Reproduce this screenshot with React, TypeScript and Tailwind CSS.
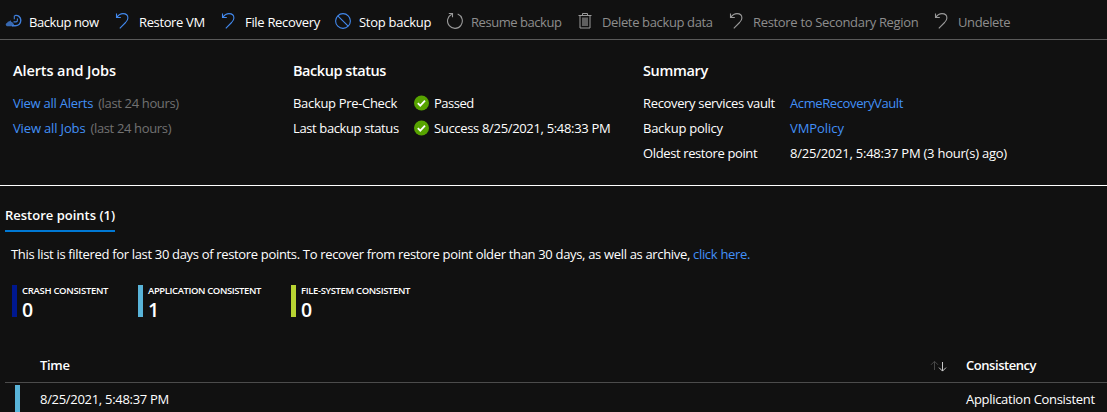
import type { ReactNode } from "react";

const RestoreIcon = () => (
  <svg width="16" height="18" viewBox="0 0 16 18" fill="none" stroke="currentColor" strokeWidth="1.1">
    <path d="M1.5 1.5V5.5H5.8M1.7 5.3C3.4 3 5.4 1.6 8 1.6c3 0 4.9 1.8 4.9 4.3 0 2-1 3.2-2.3 4.6L4.8 16.4" />
  </svg>
);

const BackupIcon = () => (
  <svg width="17" height="18" viewBox="0 0 17 18" fill="none" className="shrink-0">
    <path d="M2 14.200a1.700 1.700 0 0 1 0-3.300 2.500 2.500 0 0 1 2.400-1.700l1.200-1 .6 1.500c1.200.3 1.800 1 2.100 1.900.9.300 1.100 2.200-.2 2.600z" fill="#3768b0" />
    <path d="M9.500 3.600c3.500-1 6.300 1.400 6.300 4.700 0 3.200-2.300 5.500-5.600 5.500H7" stroke="#3f7fdc" strokeWidth="1.400" />
    <path d="M9.300 3.700v3.600M8.500 9.900h2.600c1 0 1.300-.8 1.300-2V6.400" stroke="#3f7fdc" strokeWidth="1.100" />
  </svg>
);

const StopIcon = () => (
  <svg width="16" height="18" viewBox="0 0 16 18" fill="none" stroke="currentColor" strokeWidth="1.1">
    <circle cx="8" cy="9" r="7.400" />
    <path d="M2.800 3.800l10.400 10.400" />
  </svg>
);

const ResumeIcon = () => (
  <svg width="16" height="18" viewBox="0 0 16 18" fill="none" stroke="currentColor" strokeWidth="1.1">
    <path d="M10.700 2.100a7.400 7.400 0 1 1-6 .2M1.800 1.500H5.500V5.200" />
  </svg>
);

const DeleteIcon = () => (
  <svg width="16" height="18" viewBox="0 0 16 18" fill="none" stroke="currentColor">
    <path d="M.5 3.500h13M4.500 3.500v-2h5v2M2 3.500v12.500h10V3.500" />
    <rect x="4" y="5.500" width="6" height="8.500" fill="#5f5f5f" stroke="none" />
  </svg>
);

const CheckIcon = () => (
  <svg width="16" height="16" viewBox="0 0 16 16" fill="none" className="mb-0.5">
    <circle cx="8.500" cy="8" r="7.500" fill="#57a300" />
    <path d="M4.800 8.200l2.500 2.500 4.700-5" stroke="#fff" strokeWidth="1.800" />
  </svg>
);

const SortIcon = () => (
  <svg width="17" height="12" viewBox="0 0 17 12" fill="none">
    <path d="M4.500 10V1.500M1 4.800l3.500-3.500L8 4.800" stroke="#484848" />
    <path d="M12.500 2v9M9 7.600l3.500 3.500L16 7.600" stroke="#c8c8c8" />
  </svg>
);

type ActionProps = { icon: ReactNode; label: string; width: string; tracking: string; disabled?: boolean };

function Action({ icon, label, width, tracking, disabled }: ActionProps) {
  return (
    <button className={`flex shrink-0 items-center gap-2 whitespace-nowrap ${width}`}>
      <span className={`flex w-4 shrink-0 ${disabled ? "text-[#9a9a9a]" : "text-[#4289ee]"}`}>{icon}</span>
      <span className={`pt-[3px] ${tracking} ${disabled ? "text-[#8d8d8d]" : "text-white"}`}>{label}</span>
    </button>
  );
}

type StatProps = { color: string; label: string; value: number; width: string; tracking: string };

function Stat({ color, label, value, width, tracking }: StatProps) {
  return (
    <div className={`flex h-8 ${width}`}>
      <div className={`w-[5px] shrink-0 ${color}`} />
      <div className="pl-[5px]">
        <div className={`h-[13px] text-[9.5px] leading-[11px] font-semibold whitespace-nowrap ${tracking}`}>{label}</div>
        <div className="text-[19.5px] leading-[23px] font-semibold">{value}</div>
      </div>
    </div>
  );
}

const link = "text-[#4290f7]";

export default function App() {
  return (
    <main className="h-[412px] w-full overflow-hidden bg-[#111111] font-['Open_Sans','Noto_Sans',sans-serif] text-[13px] leading-[25px] text-white">
      <header className="flex h-10 items-center border-b border-[#5a5a5a] pt-0.5 pl-[5px]">
        <Action icon={<BackupIcon />} label="Backup now" width="w-[110px]" tracking="tracking-[-0.43px]" />
        <Action icon={<RestoreIcon />} label="Restore VM" width="w-[106px]" tracking="tracking-[-0.37px]" />
        <Action icon={<RestoreIcon />} label="File Recovery" width="w-[114px]" tracking="tracking-[-0.31px]" />
        <Action icon={<StopIcon />} label="Stop backup" width="w-[112px]" tracking="tracking-[-0.26px]" />
        <Action icon={<ResumeIcon />} label="Resume backup" width="w-[131px]" tracking="tracking-[-0.46px]" disabled />
        <Action icon={<DeleteIcon />} label="Delete backup data" width="w-[151px]" tracking="tracking-[-0.36px]" disabled />
        <Action icon={<RestoreIcon />} label="Restore to Secondary Region" width="w-[205px]" tracking="tracking-[-0.32px]" disabled />
        <Action icon={<RestoreIcon />} label="Undelete" width="w-[90px]" tracking="tracking-[-0.38px]" disabled />
      </header>

      <section className="flex h-[146px] border-b border-white pt-[18px] pl-[13px] whitespace-nowrap">
        <div className="w-[280px]">
          <h2 className="mb-2 text-[14.5px] font-semibold tracking-[-0.1px]">Alerts and Jobs</h2>
          <div className="flex gap-[5px]">
            <a className={`${link} tracking-[-0.25px]`}>View all Alerts</a>
            <span className="tracking-[-0.35px] text-[#727272]">(last 24 hours)</span>
          </div>
          <div className="flex gap-[5px]">
            <a className={`${link} tracking-[-0.15px]`}>View all Jobs</a>
            <span className="tracking-[-0.35px] text-[#727272]">(last 24 hours)</span>
          </div>
        </div>
        <div className="w-[350px]">
          <h2 className="mb-2 text-[14.5px] font-semibold tracking-[-0.45px]">Backup status</h2>
          <div className="grid grid-cols-[120px_21px_auto] items-center">
            <span className="tracking-[-0.32px]">Backup Pre-Check</span>
            <CheckIcon />
            <span className="tracking-[-0.5px]">Passed</span>
            <span className="tracking-[-0.38px]">Last backup status</span>
            <CheckIcon />
            <span className="tracking-[-0.33px]">Success 8/25/2021, 5:48:33 PM</span>
          </div>
        </div>
        <div>
          <h2 className="mb-2 text-[14.5px] font-semibold tracking-[-0.35px]">Summary</h2>
          <div className="grid grid-cols-[147px_auto]">
            <span className="tracking-[-0.34px]">Recovery services vault</span>
            <a className={`${link} tracking-[-0.39px]`}>AcmeRecoveryVault</a>
            <span className="tracking-[-0.25px]">Backup policy</span>
            <a className={`${link} tracking-[-0.07px]`}>VMPolicy</a>
            <span className="tracking-[-0.38px]">Oldest restore point</span>
            <span className="tracking-[-0.23px]">8/25/2021, 5:48:37 PM (3 hour(s) ago)</span>
          </div>
        </div>
      </section>

      <section className="pt-[17px]">
        <div className="ml-[5px] h-[29px] w-[110px] border-b-2 border-[#0078d4] font-semibold whitespace-nowrap">Restore points (1)</div>
        <p className="mt-[10px] flex gap-[3px] pl-[11px] whitespace-nowrap">
          <span className="tracking-[-0.33px]">This list is filtered for last 30 days of restore points. To recover from restore point older than 30 days, as well as archive,</span>
          <a className={`${link} tracking-[-0.3px]`}>click here.</a>
        </p>
        <div className="mt-[18px] flex pl-3">
          <Stat color="bg-[#00188f]" label="CRASH CONSISTENT" value={0} width="w-[126px]" tracking="tracking-[-0.3px]" />
          <Stat color="bg-[#59b4d9]" label="APPLICATION CONSISTENT" value={1} width="w-[153px]" tracking="tracking-[-0.4px]" />
          <Stat color="bg-[#b8d432]" label="FILE-SYSTEM CONSISTENT" value={0} width="w-[140px]" tracking="tracking-[-0.37px]" />
        </div>
      </section>

      <section className="mt-[36px] ml-[5px]">
        <div className="flex h-[30px] items-start border-b border-[#4c4c4c] pl-[35px] font-semibold">
          <span className="w-[890px] tracking-[-0.3px]">Time</span>
          <span className="flex h-[26px] w-9 items-center"><SortIcon /></span>
          <span className="tracking-[-0.45px]">Consistency</span>
        </div>
        <div className="flex h-[29px] pt-0.5 pl-[10px]">
          <div className="h-full w-[5px] bg-[#59b4d9]" />
          <span className="w-[946px] pt-0.5 pl-5 tracking-[-0.3px]">8/25/2021, 5:48:37 PM</span>
          <span className="pt-0.5 tracking-[-0.3px] whitespace-nowrap">Application Consistent</span>
        </div>
      </section>
    </main>
  );
}
